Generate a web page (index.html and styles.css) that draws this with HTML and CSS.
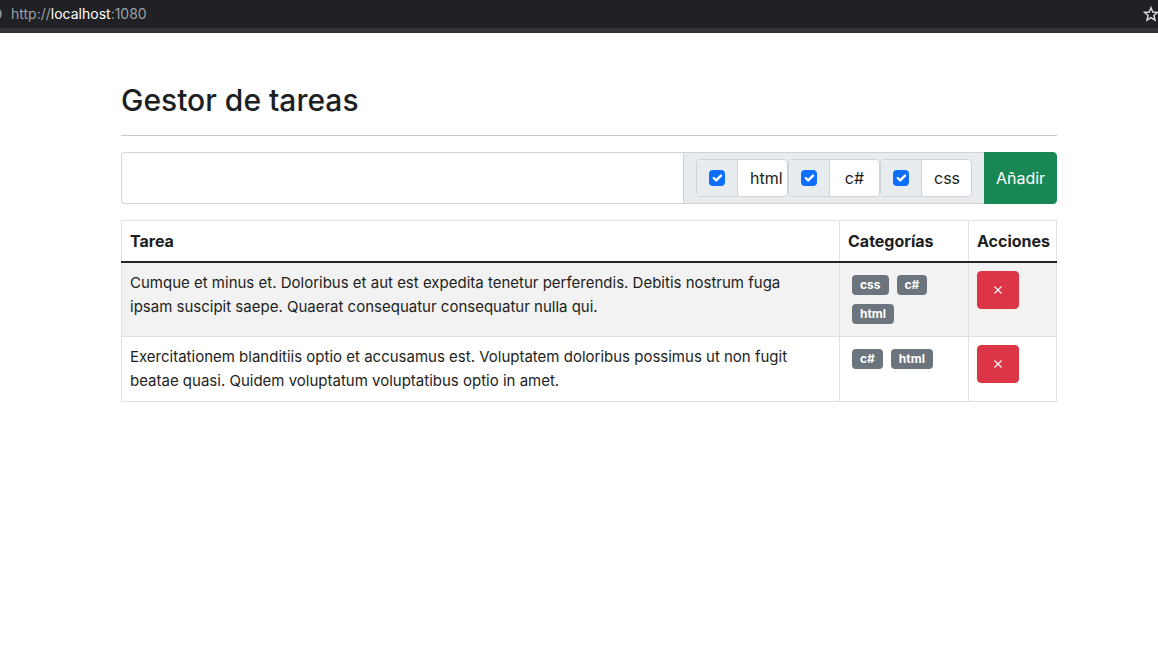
FILE: index.html
```html
<!DOCTYPE html>
<html lang="es">
<head>
<meta charset="utf-8">
<title>Gestor de tareas</title>
<link rel="stylesheet" href="styles.css">
</head>
<body>
<header class="browser-bar">
  <svg class="info-icon" viewBox="0 0 14 14" aria-hidden="true"><circle cx="7" cy="7" r="6" fill="none" stroke="currentColor" stroke-width="1.5"/></svg>
  <div class="address">http://<span class="host">localhost</span>:1080</div>
  <svg class="star-icon" viewBox="0 0 16 16" aria-hidden="true"><path d="M8 1.7 9.8 6l4.7.4-3.6 3.1 1.1 4.6L8 11.7l-4 2.4 1.1-4.6L1.5 6.400 6.200 6Z" fill="none" stroke="currentColor" stroke-width="1.5"/></svg>
</header>
<main class="container">
  <h1 class="title">Gestor de tareas</h1>
  <hr class="rule">
  <form class="task-form">
    <input class="task-input" type="text" aria-label="Tarea">
    <div class="categories">
      <div class="category">
        <span class="check-cell"><input class="check" type="checkbox" id="cat-html" checked></span>
        <label class="category-name" for="cat-html">html</label>
      </div>
      <div class="category">
        <span class="check-cell"><input class="check" type="checkbox" id="cat-cs" checked></span>
        <label class="category-name" for="cat-cs">c#</label>
      </div>
      <div class="category">
        <span class="check-cell"><input class="check" type="checkbox" id="cat-css" checked></span>
        <label class="category-name" for="cat-css">css</label>
      </div>
    </div>
    <button class="add-button" type="button">Añadir</button>
  </form>
  <table class="tasks">
    <thead>
      <tr><th>Tarea</th><th class="col-categories">Categorías</th><th class="col-actions">Acciones</th></tr>
    </thead>
    <tbody>
      <tr>
        <td class="task-text">Cumque et minus et. Doloribus et aut est expedita tenetur perferendis. Debitis nostrum fuga ipsam suscipit saepe. Quaerat consequatur consequatur nulla qui.</td>
        <td><div class="badges"><span class="badge">css</span><span class="badge">c#</span><span class="badge">html</span></div></td>
        <td><button class="delete-button" type="button" aria-label="Eliminar"><svg class="cross" viewBox="0 0 10 10" aria-hidden="true"><path d="M1.500 1.500 8.500 8.500M8.500 1.500 1.500 8.500" stroke="currentColor" stroke-width="1.1"/></svg></button></td>
      </tr>
      <tr>
        <td class="task-text">Exercitationem blanditiis optio et accusamus est. Voluptatem doloribus possimus ut non fugit beatae quasi. Quidem voluptatum voluptatibus optio in amet.</td>
        <td><div class="badges"><span class="badge">c#</span><span class="badge">html</span></div></td>
        <td><button class="delete-button" type="button" aria-label="Eliminar"><svg class="cross" viewBox="0 0 10 10" aria-hidden="true"><path d="M1.500 1.500 8.500 8.500M8.500 1.500 1.500 8.500" stroke="currentColor" stroke-width="1.1"/></svg></button></td>
      </tr>
    </tbody>
  </table>
</main>
</body>
</html>
```
FILE: styles.css
```css
*, *::before, *::after { box-sizing: border-box; }

body {
  margin: 0;
  background: #fff;
  color: #1c1e21;
  font-family: Inter, "Liberation Sans", sans-serif;
  font-size: 16px;
  line-height: 24px;
}

button, input { font: inherit; }

.browser-bar {
  display: flex;
  align-items: center;
  height: 33px;
  overflow: hidden;
  background: #202124;
  border-bottom: 5px solid #323337;
  color: #9aa0a6;
  font-size: 14px;
}

.info-icon {
  flex: none;
  width: 14px;
  height: 14px;
  margin-left: -12px;
  margin-right: 9px;
}

.address { flex: 1; }
.host { color: #fff; }

.star-icon {
  flex: none;
  width: 16px;
  height: 16px;
  margin-right: -1px;
  color: #d5d7da;
}

.container { padding: 48px 101px 48px 121px; }

.title {
  margin: 0 0 16px;
  font-size: 30px;
  font-weight: 500;
  line-height: 38px;
}

.rule {
  margin: 0 0 16px;
  border: 0;
  border-top: 1px solid #c8c9ca;
}

.task-form {
  display: flex;
  align-items: stretch;
  margin-bottom: 16px;
}

.task-input {
  flex: 1;
  min-width: 0;
  padding: 6px 12px;
  border: 1px solid #ced4da;
  border-right: 0;
  border-radius: 4px 0 0 4px;
  background: #fff;
  color: inherit;
}

.categories {
  display: flex;
  padding: 6px 12px;
  border: 1px solid #ced4da;
  border-right: 0;
  background: #e9ecef;
}

.category {
  display: flex;
  width: 92px;
  height: 38px;
  border: 1px solid #ced4da;
  border-radius: 4px;
  background: #fff;
}

.check-cell {
  display: flex;
  flex: none;
  align-items: center;
  justify-content: center;
  width: 41px;
  border-right: 1px solid #ced4da;
  border-radius: 3px 0 0 3px;
  background: #e9ecef;
}

.check {
  appearance: none;
  width: 16px;
  height: 16px;
  margin: 0;
  border-radius: 4px;
  background: #fff;
  border: 1px solid #adb5bd;
}

.check:checked {
  border: 0;
  background: #0d6efd url("data:image/svg+xml,%3Csvg xmlns='http://www.w3.org/2000/svg' viewBox='0 0 20 20'%3E%3Cpath fill='none' stroke='%23fff' stroke-linecap='round' stroke-linejoin='round' stroke-width='3' d='M6 10l3 3 6-6'/%3E%3C/svg%3E") center / contain no-repeat;
}

.category-name {
  flex: 1;
  min-width: 0;
  padding: 6px 12px;
  text-align: center;
}

.add-button {
  width: 73px;
  padding: 6px 0;
  border: 1px solid #198754;
  border-radius: 0 4px 4px 0;
  background: #198754;
  color: #fff;
}

.tasks {
  width: 100%;
  border-collapse: collapse;
  table-layout: fixed;
}

.tasks th, .tasks td {
  padding: 8px;
  border: 1px solid #dee2e6;
  text-align: left;
  vertical-align: top;
}

.tasks .task-text {
  padding-right: 24px;
  font-size: 15px;
}

.tasks thead th { border-bottom: 2px solid #212529; }
.tasks tbody tr:nth-child(odd) { background: #f2f2f2; }
.col-categories { width: 129px; }
.col-actions { width: 88px; }

.badges {
  display: flex;
  flex-wrap: wrap;
  gap: 9px 8px;
  padding: 4px;
}

.badge {
  padding: 4px 8px;
  border-radius: 4px;
  background: #6c757d;
  color: #fff;
  font-size: 12px;
  font-weight: 700;
  line-height: 12px;
}

.delete-button {
  display: flex;
  align-items: center;
  justify-content: center;
  width: 42px;
  height: 38px;
  padding: 0;
  border: 1px solid #dc3545;
  border-radius: 4px;
  background: #dc3545;
  color: #fff;
}

.cross { width: 10px; height: 10px; }
```
